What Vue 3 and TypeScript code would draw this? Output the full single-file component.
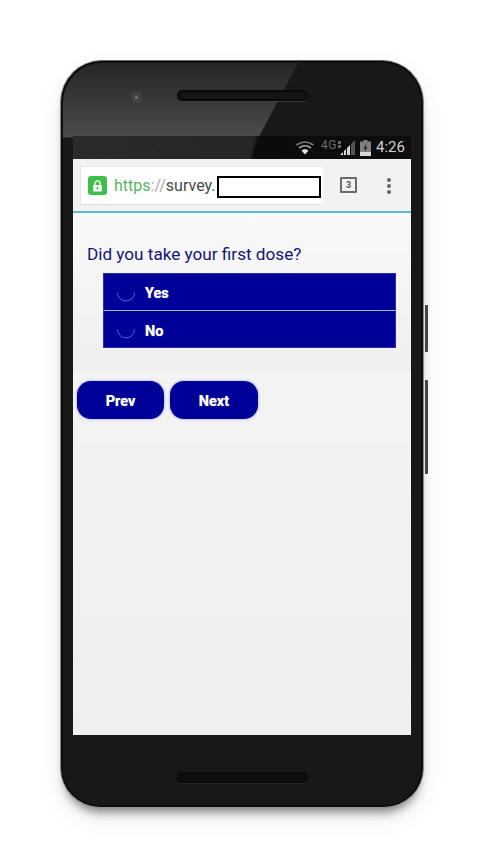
<script setup lang="ts">
interface Choice {
  label: string
}
const choices: Choice[] = [{ label: 'Yes' }, { label: 'No' }]
</script>

<template>
  <div class="page">
    <div class="phone">
      <div class="gloss"></div>
      <span class="btn-side power"></span>
      <span class="btn-side volume"></span>
      <div class="top-bezel">
        <span class="camera"></span>
        <span class="speaker"></span>
      </div>
      <div class="screen">
        <div class="status">
          <svg class="wifi" width="18" height="14" viewBox="0 0 18 14">
            <path d="M0.5 4 Q9 -2 17.5 4" fill="none" stroke="#7a7a7a" stroke-width="1.6" />
            <path d="M3 7 Q9 2.5 15 7" fill="none" stroke="#a5a5a5" stroke-width="1.6" />
            <path d="M5.5 9.6 Q9 7 12.5 9.6 L9 13.6 Z" fill="#e6e6e6" />
          </svg>
          <span class="net">4G</span>
          <span class="arrows">
            <i></i>
            <i></i>
          </span>
          <svg class="signal" width="15" height="15" viewBox="0 0 15 15">
            <path d="M11 4 L15 0 L15 15 L11 15 Z" fill="#555" />
            <path d="M0 15 L3 12 L3 15 Z M4 15 L4 11 L6 9 L6 15 Z M7 15 L7 8 L10 5 L10 15 Z" fill="#d8d8d8" />
          </svg>
          <svg class="battery" width="11" height="16" viewBox="0 0 11 16">
            <path d="M3.5 0 H7.5 V1.5 H11 V16 H0 V1.5 H3.5 Z" fill="#7f7f7f" />
            <path d="M0 12 H11 V16 H0 Z" fill="#d8d8d8" />
            <path d="M6.2 3.5 L3.5 8.5 H5.3 L4.8 12 L7.5 7 H5.7 Z" fill="#222" />
          </svg>
          <span class="time">4:26</span>
        </div>
        <div class="chrome">
          <div class="url-card">
            <span class="lock">
              <svg width="11" height="12" viewBox="0 0 11 12">
                <path d="M3 5 V3.4 A2.5 2.5 0 0 1 8 3.4 V5" fill="none" stroke="#fff" stroke-width="1.4" />
                <path fill-rule="evenodd" d="M1.2 5 H9.8 V11.4 H1.2 Z M4.6 7 V9.5 H6.4 V7 Z" fill="#fff" />
              </svg>
            </span>
            <span class="url"><span class="scheme">https</span><span class="slashes">://</span>survey.</span>
            <input class="url-mask" type="text" aria-label="Address" />
          </div>
          <span class="tabs">3</span>
          <span class="menu"><i></i><i></i><i></i></span>
        </div>
        <main class="content">
          <section class="panel">
            <h1 class="question">Did you take your first dose?</h1>
            <div class="choices">
              <label v-for="c in choices" :key="c.label" class="choice">
                <svg class="radio" width="20" height="20" viewBox="0 0 20 20">
                  <path d="M1.5 10.5 A8.5 8.5 0 0 0 18.5 10.5" fill="none" stroke="#5a5ae0" stroke-width="1" />
                </svg>
                <span class="choice-label">{{ c.label }}</span>
              </label>
            </div>
          </section>
          <div class="actions">
            <button class="action" type="button">Prev</button>
            <button class="action" type="button">Next</button>
          </div>
        </main>
      </div>
      <div class="bottom-bezel">
        <span class="speaker bottom"></span>
      </div>
    </div>
  </div>
</template>

<style scoped>
.page {
  width: 486px;
  height: 867px;
  box-sizing: border-box;
  padding: 60px 62px 0 60px;
  background: #fff;
  overflow: hidden;
}
.phone {
  position: relative;
  width: 364px;
  height: 748px;
  box-sizing: border-box;
  border-radius: 42px 42px 40px 40px;
  background: #181818;
  border: 1.5px solid #8c8c8c;
  border-top-color: #666;
  border-bottom-color: #999;
  box-shadow:
    inset 0 0 0 1.5px #0a0a0a,
    0 9px 10px -5px rgba(0, 0, 0, 0.45),
    0 10px 26px -2px rgba(0, 0, 0, 0.1);
  display: flex;
  flex-direction: column;
  align-items: center;
}
.gloss {
  position: absolute;
  left: 1.5px;
  top: 1.5px;
  width: 236px;
  height: 75px;
  border-top-left-radius: 40px;
  background: linear-gradient(180deg, #262626 0%, #383838 50%, #4c4c4c 100%);
  clip-path: polygon(0 0, 100% 0, 196px 100%, 0 100%);
}
.btn-side {
  position: absolute;
  right: -5px;
  width: 3px;
  background: #444;
  border-radius: 0 1px 1px 0;
}
.power {
  top: 244px;
  height: 47px;
}
.volume {
  top: 319px;
  height: 94px;
}
.top-bezel {
  position: relative;
  width: 100%;
  height: 75px;
  flex: none;
  display: flex;
  justify-content: center;
  box-sizing: border-box;
  padding-top: 29px;
}
.camera {
  position: absolute;
  left: 74px;
  top: 35px;
  width: 3px;
  height: 3px;
  border-radius: 50%;
  background: #777;
  box-shadow: 0 0 0 4px rgba(255, 255, 255, 0.05);
}
.speaker {
  display: block;
  width: 131px;
  height: 11px;
  border-radius: 6px;
  background: #141414;
  box-shadow: inset 0 0 0 2px #0a0a0a, 0 1px 0 #3a3a3a;
}
.speaker.bottom {
  background: #0e0e0e;
  box-shadow: inset 0 0 0 1px #070707, 0 1px 0 #262626;
}
.screen {
  position: relative;
  width: 338px;
  height: 599px;
  flex: none;
  display: flex;
  flex-direction: column;
  background: linear-gradient(180deg, #f6f6f6 0%, #efefef 100%);
  font-family: Roboto, "Liberation Sans", sans-serif;
}
.status {
  height: 23px;
  flex: none;
  display: flex;
  align-items: center;
  justify-content: flex-end;
  padding-right: 6px;
  box-sizing: border-box;
  background: linear-gradient(105deg, #2b2b2b 0%, #262626 53%, #0b0b0b 54%, #0d0d0d 100%);
  color: #c8c8c8;
}
.wifi {
  margin-right: 7px;
  margin-top: 1px;
}
.net {
  font-size: 12px;
  color: #6c6c6c;
  line-height: 1;
  margin-top: -5px;
  letter-spacing: 0.5px;
}
.arrows {
  display: flex;
  flex-direction: column;
  gap: 1px;
  margin: -6px 0 0 1px;
}
.arrows i {
  display: block;
  width: 3px;
  height: 3px;
  background: #666;
}
.signal {
  margin-left: -1px;
  margin-right: 5px;
}
.battery {
  margin-right: 5px;
}
.time {
  font-size: 15px;
  line-height: 1;
  width: 29px;
  color: #cfcfcf;
}
.chrome {
  height: 54px;
  flex: none;
  display: flex;
  align-items: flex-start;
  box-sizing: border-box;
  padding: 7px 0 0 7px;
  background: #f2f2f2;
  border-bottom: 2px solid #62b3cc;
}
.url-card {
  position: relative;
  width: 243px;
  height: 39px;
  box-sizing: border-box;
  display: flex;
  align-items: center;
  padding-left: 7px;
  background: #fff;
  border: 1px solid #e6e6e6;
  border-right-color: #fff;
  border-bottom: 1px solid #ddd;
}
.lock {
  width: 19px;
  height: 19px;
  flex: none;
  border-radius: 3px;
  background: #3cc04a;
  display: flex;
  align-items: center;
  justify-content: center;
}
.url {
  margin-left: 7px;
  font-size: 16px;
  color: #484848;
  white-space: nowrap;
}
.scheme {
  color: #59b461;
}
.slashes {
  color: #a9a9a9;
}
.url-mask {
  position: absolute;
  left: 136px;
  top: 9px;
  width: 104px;
  height: 22px;
  box-sizing: border-box;
  margin: 0;
  padding: 0;
  background: #fff;
  border: 2px solid #000;
  border-radius: 0;
}
.tabs {
  width: 17px;
  height: 16px;
  box-sizing: border-box;
  margin: 11px 0 0 17px;
  flex: none;
  border: 2px solid #6b6b6b;
  border-radius: 1px;
  color: #555;
  font-size: 9px;
  font-weight: 700;
  line-height: 12px;
  text-align: center;
}
.menu {
  display: flex;
  flex-direction: column;
  gap: 2px;
  margin: 12px 0 0 30px;
}
.menu i {
  display: block;
  width: 4px;
  height: 4px;
  border-radius: 50%;
  background: #666;
}
.content {
  flex: 1;
  display: flex;
  flex-direction: column;
}
.panel {
  height: 157px;
  flex: none;
  box-sizing: border-box;
  padding: 29px 15px 0 14px;
  background: linear-gradient(180deg, #f9f9f9 0%, #efefef 100%);
}
.question {
  margin: 0;
  font-size: 17.15px;
  font-weight: 400;
  line-height: 24px;
  color: #14147a;
}
.choices {
  margin: 7px 0 0 16px;
  display: flex;
  flex-direction: column;
  width: 293px;
}
.choice {
  height: 38px;
  box-sizing: border-box;
  display: flex;
  align-items: center;
  padding-left: 12px;
  gap: 9px;
  background: #000099;
  border: 1px solid #2b2bb0;
  color: #fff;
  font-size: 14.5px;
  font-weight: 700;
}
.choice + .choice {
  height: 37px;
  border-top: 0;
}
.choice:first-child {
  border-bottom: 1px solid #b3b3dc;
}
.radio {
  flex: none;
}
.choice-label {
  padding-top: 2px;
  text-shadow: 0 0 1px rgba(255, 255, 255, 0.7);
}
.choice + .choice .choice-label {
  padding-top: 4px;
}
.actions {
  display: flex;
  gap: 6px;
  padding: 11px 0 0 4px;
}
.action {
  width: 87px;
  height: 38px;
  padding: 2px 0 0;
  border: 0;
  border-radius: 14px;
  background: #000099;
  color: #fff;
  font-family: Roboto, "Liberation Sans", sans-serif;
  font-size: 14.5px;
  font-weight: 700;
  text-shadow: 0 0 1px rgba(255, 255, 255, 0.7);
  box-shadow: 0 0 3px rgba(60, 60, 200, 0.5);
}
.action + .action {
  width: 88px;
}
.bottom-bezel {
  flex: 1;
  width: 100%;
  display: flex;
  justify-content: center;
  box-sizing: border-box;
  padding-top: 37px;
}
</style>
